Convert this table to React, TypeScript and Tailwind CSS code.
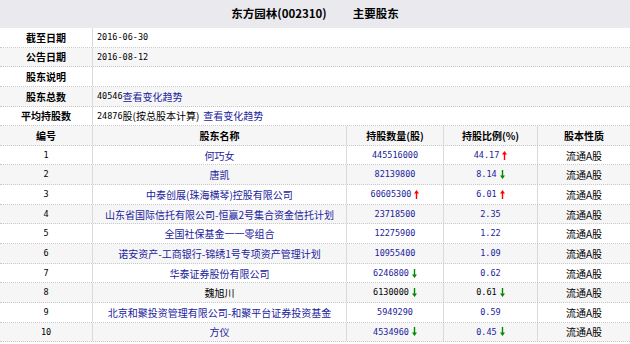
import React from 'react';

type Holder = {
  no: number;
  name: string;
  count: string;
  countArrow?: 'up' | 'down';
  pct: string;
  pctArrow?: 'up' | 'down';
  plain?: boolean;
};

const holders: Holder[] = [
  { no: 1, name: '何巧女', count: '445516000', pct: '44.17', pctArrow: 'up' },
  { no: 2, name: '唐凯', count: '82139800', pct: '8.14', pctArrow: 'down' },
  { no: 3, name: '中泰创展(珠海横琴)控股有限公司', count: '60605300', countArrow: 'up', pct: '6.01', pctArrow: 'up' },
  { no: 4, name: '山东省国际信托有限公司-恒赢2号集合资金信托计划', count: '23718500', pct: '2.35' },
  { no: 5, name: '全国社保基金一一零组合', count: '12275900', pct: '1.22' },
  { no: 6, name: '诺安资产-工商银行-锦绣1号专项资产管理计划', count: '10955400', pct: '1.09' },
  { no: 7, name: '华泰证券股份有限公司', count: '6246800', countArrow: 'down', pct: '0.62' },
  { no: 8, name: '魏旭川', count: '6130000', countArrow: 'down', pct: '0.61', pctArrow: 'down', plain: true },
  { no: 9, name: '北京和聚投资管理有限公司-和聚平台证券投资基金', count: '5949290', pct: '0.59' },
  { no: 10, name: '方仪', count: '4534960', countArrow: 'down', pct: '0.45', pctArrow: 'down' },
];

function Arrow({ dir }: { dir: 'up' | 'down' }) {
  const color = dir === 'up' ? '#ff0000' : '#008a00';
  return (
    <svg width="5" height="9" viewBox="0 0 5 9" className="ml-[3px] inline-block">
      {dir === 'up' ? (
        <path d="M2.5 0 L5 3.5 L3.2 3.5 L3.2 9 L1.8 9 L1.8 3.5 L0 3.5 Z" fill={color} />
      ) : (
        <path d="M2.5 9 L5 5.5 L3.2 5.5 L3.2 0 L1.8 0 L1.8 5.5 L0 5.5 Z" fill={color} />
      )}
    </svg>
  );
}

const num = "font-['DejaVu_Sans_Mono',monospace] text-[8.5px]";
const row = 'h-[19.65px] border-b border-dotted border-[#c9c9c9]';
const link = 'text-[#22229c]';

function InfoRow({ label, alt, children }: { label: string; alt?: boolean; children?: React.ReactNode }) {
  return (
    <div className={`flex ${row} ${alt ? 'bg-[#f6f6f6]' : 'bg-white'}`}>
      <div className="w-[93px] shrink-0 flex items-center justify-center font-bold border-r border-[#dadada]">
        {label}
      </div>
      <div className="flex items-center pl-[4px]">{children}</div>
    </div>
  );
}

export default function App() {
  return (
    <div className="w-[630px] h-[344px] overflow-hidden bg-white text-[10px] text-black font-['Noto_Sans_CJK_SC',sans-serif]">
      <div className="h-[28px] bg-[#e9e9ee] flex items-center justify-center gap-[26px] font-bold text-[11.5px]">
        <span>东方园林(002310)</span>
        <span>主要股东</span>
      </div>

      <InfoRow label="截至日期">
        <span className={num}>2016-06-30</span>
      </InfoRow>
      <InfoRow label="公告日期" alt>
        <span className={num}>2016-08-12</span>
      </InfoRow>
      <InfoRow label="股东说明" />
      <InfoRow label="股东总数" alt>
        <span className={num}>40546</span>
        <span className={link}>查看变化趋势</span>
      </InfoRow>
      <InfoRow label="平均持股数">
        <span className={num}>24876</span>
        <span>股(按总股本计算)</span>
        <span className={`${link} ml-[4px]`}>查看变化趋势</span>
      </InfoRow>

      <div className={`grid grid-cols-[93px_254px_97px_94px_1fr] ${row} bg-[#f6f6f6] font-bold`}>
        <div className="flex items-center justify-center border-r border-[#dadada]">编号</div>
        <div className="flex items-center justify-center border-r border-[#dadada]">股东名称</div>
        <div className="flex items-center justify-center border-r border-[#dadada]">持股数量(股)</div>
        <div className="flex items-center justify-center border-r border-[#dadada]">持股比例(%)</div>
        <div className="flex items-center justify-center">股本性质</div>
      </div>

      {holders.map((h, i) => {
        const tone = h.plain ? 'text-black' : link;
        return (
          <div
            key={h.no}
            className={`grid grid-cols-[93px_254px_97px_94px_1fr] ${row} ${i % 2 === 1 ? 'bg-[#f6f6f6]' : 'bg-white'}`}
          >
            <div className={`flex items-center justify-center border-r border-[#dadada] ${num}`}>{h.no}</div>
            <div className={`flex items-center justify-center border-r border-[#dadada] whitespace-nowrap ${tone}`}>
              {h.name}
            </div>
            <div className={`flex items-center justify-center border-r border-[#dadada] ${tone}`}>
              <span className={num}>{h.count}</span>
              {h.countArrow && <Arrow dir={h.countArrow} />}
            </div>
            <div className={`flex items-center justify-center border-r border-[#dadada] ${tone}`}>
              <span className={num}>{h.pct}</span>
              {h.pctArrow && <Arrow dir={h.pctArrow} />}
            </div>
            <div className="flex items-center justify-center">流通A股</div>
          </div>
        );
      })}
    </div>
  );
}
